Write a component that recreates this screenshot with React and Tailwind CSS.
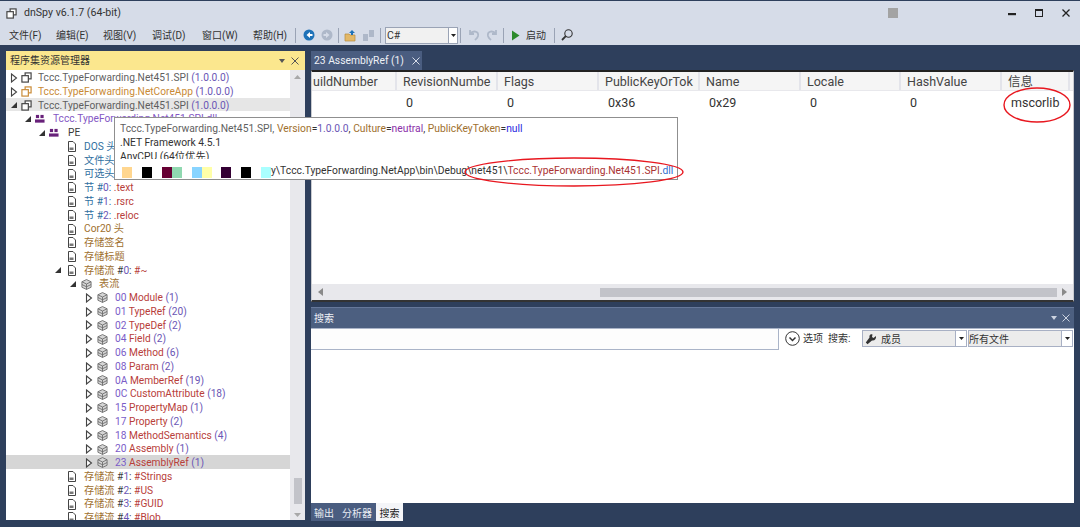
const P = 'text-[#7a5cc8]', R = 'text-[#b8403a]', B = 'text-[#2f6f9f]', W = 'text-[#a0702e]', D = 'text-[#3c3c3c]', G = 'text-[#5f5f5f]', V = 'text-[#6a55b5]';

function Arrow({ open }) {
  return (
    <svg width="8" height="10" viewBox="0 0 8 10" className="shrink-0">
      {open ? <path d="M7 2 V8 H1 Z" fill="#333" /> : <path d="M1.5 1 L6.5 5 L1.5 9 Z" fill="#fff" stroke="#444" strokeWidth="1.1" />}
    </svg>
  );
}
function AsmIcon({ color = '#444' }) {
  return (
    <svg width="11" height="11" viewBox="0 0 12 12" className="shrink-0" fill="#fff" stroke={color} strokeWidth="1.3">
      <rect x="4.5" y="1" width="6.5" height="6.5" />
      <rect x="1" y="4" width="7" height="7" />
    </svg>
  );
}
function ModIcon() {
  return (
    <svg width="10" height="10" viewBox="0 0 11 10" className="shrink-0" fill="#68217a">
      <rect x="1" y="0.5" width="3.5" height="3.5" />
      <rect x="6" y="0.5" width="3.5" height="3.5" />
      <rect x="0" y="5.5" width="10.5" height="3.5" />
    </svg>
  );
}
function FileIcon() {
  return (
    <svg width="8" height="11" viewBox="0 0 8 11" className="shrink-0" fill="#fff" stroke="#444" strokeWidth="1">
      <path d="M.5 .5 H5 L7.5 3 V10.5 H.5 Z" />
      <path d="M1.5 6.5 H5.5 V9 H1.5 Z" fill="#777" stroke="none" />
    </svg>
  );
}
function CubeIcon() {
  return (
    <svg width="11" height="11" viewBox="0 0 12 12" className="shrink-0" fill="#d5d5d5" stroke="#666" strokeWidth="0.9">
      <path d="M6 .6 L11 3 V9 L6 11.4 L1 9 V3 Z" />
      <path d="M1 3 L6 5.5 L11 3 M6 5.5 V11.4 M1 6 L6 8.5 L11 6" fill="none" />
    </svg>
  );
}

const Num = ({ n }) => <span className={V}>{n}</span>;
const ver = <span className={V}> (1.0.0.0)</span>;
const table = (id, name, c) => (
  <>
    <span className={P}>{id}</span> <span className={R}>{name}</span> <span className={V}>({c})</span>
  </>
);
const stream = (n, name) => (
  <>
    <span className={W}>存储流</span> <span className={D}>#</span><Num n={n} /><span className={D}>:</span> <span className={R}>{name}</span>
  </>
);
const sec = (n, name) => (
  <>
    <span className={B}>节 #</span><Num n={n} /><span className={B}>:</span> <span className={R}>{name}</span>
  </>
);

const rows = [
  { a: 'c', i: 'asm', ml: 'ml-[4px]', g: 'ml-[3px]', tg: 'ml-[6px]', t: <><span className={G}>Tccc.TypeForwarding.Net451.SPI</span>{ver}</> },
  { a: 'c', i: 'asmo', ml: 'ml-[4px]', g: 'ml-[3px]', tg: 'ml-[6px]', t: <><span className="text-[#c98a35]">Tccc.TypeForwarding.NetCoreApp</span>{ver}</> },
  { a: 'o', i: 'asm', ml: 'ml-[4px]', g: 'ml-[3px]', tg: 'ml-[6px]', bg: 'bg-[#e6e6e6]', t: <><span className={G}>Tccc.TypeForwarding.Net451.SPI</span>{ver}</> },
  { a: 'o', i: 'mod', ml: 'ml-[18px]', g: 'ml-[3px]', tg: 'ml-[8px]', t: <span className="text-[#8457c4]">Tccc.TypeForwarding.Net451.SPI.dll</span> },
  { a: 'o', i: 'mod', ml: 'ml-[32px]', g: 'ml-[3px]', tg: 'ml-[9px]', t: <span className={D}>PE</span> },
  { i: 'file', ml: 'ml-[62px]', tg: 'ml-[8px]', t: <span className={B}>DOS 头</span> },
  { i: 'file', ml: 'ml-[62px]', tg: 'ml-[8px]', t: <span className={B}>文件头</span> },
  { i: 'file', ml: 'ml-[62px]', tg: 'ml-[8px]', t: <span className={B}>可选头</span> },
  { i: 'file', ml: 'ml-[62px]', tg: 'ml-[8px]', t: sec('0', '.text') },
  { i: 'file', ml: 'ml-[62px]', tg: 'ml-[8px]', t: sec('1', '.rsrc') },
  { i: 'file', ml: 'ml-[62px]', tg: 'ml-[8px]', t: sec('2', '.reloc') },
  { i: 'file', ml: 'ml-[62px]', tg: 'ml-[8px]', t: <span className={W}>Cor20 头</span> },
  { i: 'file', ml: 'ml-[62px]', tg: 'ml-[8px]', t: <span className={W}>存储签名</span> },
  { i: 'file', ml: 'ml-[62px]', tg: 'ml-[8px]', t: <span className={W}>存储标题</span> },
  { a: 'o', i: 'file', ml: 'ml-[48px]', g: 'ml-[6px]', tg: 'ml-[8px]', t: stream('0', '#~') },
  { a: 'o', i: 'cube', ml: 'ml-[63px]', g: 'ml-[4px]', tg: 'ml-[7px]', t: <span className={W}>表流</span> },
  ...[
    ['00', 'Module', 1], ['01', 'TypeRef', 20], ['02', 'TypeDef', 2], ['04', 'Field', 2], ['06', 'Method', 6],
    ['08', 'Param', 2], ['0A', 'MemberRef', 19], ['0C', 'CustomAttribute', 18], ['15', 'PropertyMap', 1],
    ['17', 'Property', 2], ['18', 'MethodSemantics', 4], ['20', 'Assembly', 1], ['23', 'AssemblyRef', 1],
  ].map(([id, n, c]) => ({ a: 'c', i: 'cube', ml: 'ml-[79px]', g: 'ml-[4px]', tg: 'ml-[7px]', bg: id === '23' ? 'bg-[#d6d6d6]' : '', t: table(id, n, c) })),
  { i: 'file', ml: 'ml-[62px]', tg: 'ml-[8px]', t: stream('1', '#Strings') },
  { i: 'file', ml: 'ml-[62px]', tg: 'ml-[8px]', t: stream('2', '#US') },
  { i: 'file', ml: 'ml-[62px]', tg: 'ml-[8px]', t: stream('3', '#GUID') },
  { i: 'file', ml: 'ml-[62px]', tg: 'ml-[8px]', t: stream('4', '#Blob') },
];

function Row({ r }) {
  return (
    <div className={`h-[13.75px] pt-[2px] flex items-center whitespace-nowrap text-[10.2px] ${r.bg || ''}`}>
      <div className={`${r.ml} flex items-center`}>
        {r.a && <Arrow open={r.a === 'o'} />}
        <div className={`${r.g || ''} flex`}>
          {r.i === 'asm' && <AsmIcon />}
          {r.i === 'asmo' && <AsmIcon color="#c98a35" />}
          {r.i === 'mod' && <ModIcon />}
          {r.i === 'file' && <FileIcon />}
          {r.i === 'cube' && <CubeIcon />}
        </div>
        <div className={r.tg}>{r.t}</div>
      </div>
    </div>
  );
}

const Sep = ({ cls = '' }) => <div className={`w-px h-[15px] bg-[#9aa3b5] shrink-0 ${cls}`} />;

const cols = [
  ['w-[85px]', 'uildNumber', ''], ['w-[101px]', 'RevisionNumbe', '0'], ['w-[101px]', 'Flags', '0'], ['w-[101px]', 'PublicKeyOrTok', '0x36'],
  ['w-[101px]', 'Name', '0x29'], ['w-[100px]', 'Locale', '0'], ['w-[101px]', 'HashValue', '0'], ['w-[68px]', '信息', 'mscorlib'],
];

const swatches = [
  ['bg-[#ffd68f]', 'ml-[3px]'], ['bg-black', 'ml-[10px]'], ['bg-[#660033]', 'ml-[10px]'], ['bg-[#90d8b0]', ''],
  ['bg-[#88d4ff]', 'ml-[10px]'], ['bg-[#ffffa8]', ''], ['bg-[#330033]', 'ml-[9px]'], ['bg-black', 'ml-[10px]'], ['bg-[#aaffff]', 'ml-[10px]'],
];

function Combo({ w, children }) {
  return (
    <div className={`${w} h-[17px] flex bg-[#ececec] border border-[#a8b0c4] text-[10px] text-[#333]`}>
      <div className="flex-1 flex items-center overflow-hidden pt-[1px]">{children}</div>
      <div className="w-[11px] bg-white border-l border-[#a8b0c4] flex items-center justify-center">
        <svg width="5" height="3" viewBox="0 0 5 3"><path d="M0 0 H5 L2.5 3 Z" fill="#222" /></svg>
      </div>
    </div>
  );
}

export default function App() {
  return (
    <div className="relative w-[1080px] h-[527px] overflow-hidden flex flex-col bg-[#2e3f5c] font-['Roboto','Noto_Sans_CJK_SC',sans-serif]">
      <header className="h-[45px] shrink-0 border-t border-[#2e3f5c] bg-[#d6dce8] flex flex-col">
        <div className="h-[24px] flex items-center pl-[6px] pr-[10px]">
          <AsmIcon />
          <span className="ml-[7px] text-[10.6px] text-[#333]">dnSpy v6.1.7 (64-bit)</span>
          <div className="ml-auto w-[10px] h-[10px] bg-[#a3a3a3] mr-[110px]" />
          <svg width="8" height="10" viewBox="0 0 8 10" className="mr-[19px]"><rect x="0" y="5" width="8" height="2.2" fill="#222" /></svg>
          <svg width="8" height="10" viewBox="0 0 8 10" className="mr-[19px]" fill="none" stroke="#222"><rect x=".5" y="1.5" width="7" height="7" /><path d="M0 2 H8" strokeWidth="2" /></svg>
          <svg width="8" height="8" viewBox="0 0 8 8" stroke="#222" strokeWidth="1.3"><path d="M.5 .5 L7.5 7.5 M7.5 .5 L.5 7.5" /></svg>
        </div>
        <div className="flex-1 flex items-center pl-[9px] text-[10px] text-[#333]">
          <div className="flex gap-[17px] whitespace-nowrap">
            <span className="w-[30px]">文件(F)</span><span className="w-[30px]">编辑(E)</span><span className="w-[32px]">视图(V)</span>
            <span className="w-[33px]">调试(D)</span><span className="w-[34px]">窗口(W)</span><span className="w-[33px]">帮助(H)</span>
          </div>
          <Sep cls="ml-[9px]" />
          <svg width="12" height="12" viewBox="0 0 12 12" className="ml-[7px]"><circle cx="6" cy="6" r="5.5" fill="#1e72b8" /><path d="M7 3 L3.5 6 L7 9 V7 H9.5 V5 H7 Z" fill="#fff" /></svg>
          <svg width="12" height="12" viewBox="0 0 12 12" className="ml-[6px]"><circle cx="6" cy="6" r="5.5" fill="#aeb8c9" /><path d="M5 3 L8.5 6 L5 9 V7 H2.5 V5 H5 Z" fill="#d6dce8" /></svg>
          <Sep cls="ml-[5px]" />
          <svg width="13" height="13" viewBox="0 0 13 13" className="ml-[5px]"><path d="M1 5 H5 L6 6 H11 V12 H1 Z" fill="#e3b868" stroke="#b58a3c" strokeWidth=".7" /><path d="M5 4 L8 1 L11 4 H9 V6 H7 V4 Z" fill="#1e72b8" /></svg>
          <svg width="13" height="13" viewBox="0 0 13 13" className="ml-[5px]"><path d="M1 5 H6 V12 H1 Z M7 1 H12 V8 H7 Z" fill="#aeb8c9" /></svg>
          <Sep cls="ml-[5px]" />
          <div className="ml-[4px] w-[73px] h-[17px] flex bg-[#f1f1f1] border border-[#9aa3b5]">
            <span className="flex-1 pl-[1px] leading-[15px] text-[10.5px]">C#</span>
            <div className="w-[9px] bg-white border-l border-[#9aa3b5] flex items-center justify-center">
              <svg width="5" height="3" viewBox="0 0 5 3"><path d="M0 0 H5 L2.5 3 Z" fill="#222" /></svg>
            </div>
          </div>
          <Sep cls="ml-[2px]" />
          <svg width="12" height="12" viewBox="0 0 12 12" className="ml-[7px]" fill="none" stroke="#aeb8c9" strokeWidth="1.8"><path d="M2 1 V5 H6 M2 5 C5 1 11 2 10 7 C9.5 9 8 10 7 11" /></svg>
          <svg width="12" height="12" viewBox="0 0 12 12" className="ml-[6px]" fill="none" stroke="#aeb8c9" strokeWidth="1.8"><path d="M10 1 V5 H6 M10 5 C7 1 1 2 2 7 C2.5 9 4 10 5 11" /></svg>
          <Sep cls="ml-[5px]" />
          <svg width="9" height="11" viewBox="0 0 9 11" className="ml-[7px]"><path d="M1 .5 L8.5 5.5 L1 10.5 Z" fill="#2c8a2c" /></svg>
          <span className="ml-[6px] w-[22px] whitespace-nowrap">启动</span>
          <Sep cls="ml-[6px]" />
          <svg width="12" height="12" viewBox="0 0 12 12" className="ml-[6px]" fill="none" stroke="#333" strokeWidth="1.1"><circle cx="7.5" cy="4.5" r="3.7" /><path d="M4.8 7.2 L1 11" strokeWidth="1.8" /></svg>
        </div>
      </header>

      <main className="h-[475px] shrink-0 flex pt-[6px] pl-[6px]">
        <section className="w-[299px] shrink-0 flex flex-col">
          <div className="h-[19px] shrink-0 bg-[#fbe78e] flex items-center px-[4px] text-[10px] text-[#333]">
            <span>程序集资源管理器</span>
            <svg width="6" height="4" viewBox="0 0 6 4" className="ml-auto"><path d="M0 0 H6 L3 4 Z" fill="#555" /></svg>
            <svg width="8" height="8" viewBox="0 0 8 8" className="ml-[6px] mr-[2px]" stroke="#555" strokeWidth="1"><path d="M.5 .5 L7.5 7.5 M7.5 .5 L.5 7.5" /></svg>
          </div>
          <div className="flex-1 flex min-h-0 bg-white">
            <div className="flex-1 min-w-0 overflow-hidden">{rows.map((r, i) => <Row key={i} r={r} />)}</div>
            <div className="w-[15px] shrink-0 bg-[#e8e8ec] flex flex-col items-center pt-[5px] pb-[3px]">
              <svg width="7" height="4" viewBox="0 0 7 4"><path d="M0 4 H7 L3.5 0 Z" fill="#a8a8a8" /></svg>
              <div className="mt-auto w-[8px] h-[26px] bg-[#c2c3c9]" />
              <svg width="7" height="4" viewBox="0 0 7 4" className="mt-[9px]"><path d="M0 0 H7 L3.5 4 Z" fill="#a8a8a8" /></svg>
            </div>
          </div>
        </section>

        <section className="ml-[6px] w-[763px] shrink-0 flex flex-col">
          <div className="h-[19px] shrink-0 flex">
            <div className="w-[111px] bg-[#4a5d80] flex items-center pl-[3px] text-[10.3px] text-[#eef1f6] whitespace-nowrap">
              <span>23 AssemblyRef (1)</span>
              <svg width="8" height="8" viewBox="0 0 8 8" className="ml-[8px]" stroke="#d8deea" strokeWidth="1"><path d="M.5 .5 L7.5 7.5 M7.5 .5 L.5 7.5" /></svg>
            </div>
          </div>
          <div className="h-[232px] shrink-0 flex flex-col bg-white border-t-2 border-b-2 border-t-[#222] border-b-[#333] border-x border-x-[#c9cbd0]">
            <div className="flex h-[19px] shrink-0 bg-[#f5f5f5] border-b border-[#e8e8ec] text-[12.5px] text-[#444] whitespace-nowrap">
              {cols.map(([w, n]) => (
                <div key={n} className={`${w} shrink-0 border-r-2 border-[#e3e4ea] overflow-hidden px-[2px] first:pl-[1px] leading-[19px] [&:not(:first-child)]:pl-[6px]`}>{n}</div>
              ))}
            </div>
            <div className="flex h-[24px] shrink-0 text-[12.5px] text-[#333] whitespace-nowrap">
              {cols.map(([w, n, v]) => (
                <div key={n} className={`${w} shrink-0 pl-[9px] leading-[24px]`}>{v}</div>
              ))}
            </div>
            <div className="mt-auto h-[16px] shrink-0 bg-[#e8e8ec] flex items-center px-[6px]">
              <svg width="5" height="8" viewBox="0 0 5 8"><path d="M5 0 V8 L0 4 Z" fill="#8a8a8a" /></svg>
              <div className="ml-[277px] w-[457px] h-[9px] bg-[#c2c3c9]" />
              <svg width="5" height="8" viewBox="0 0 5 8" className="ml-auto"><path d="M0 0 V8 L5 4 Z" fill="#8a8a8a" /></svg>
            </div>
          </div>
          <div className="mt-[5px] h-[21px] shrink-0 bg-[#4c5f80] border-t border-[#66789a] flex items-center px-[3px] text-[10px] text-[#eef1f6]">
            <span>搜索</span>
            <svg width="6" height="4" viewBox="0 0 6 4" className="ml-auto"><path d="M0 0 H6 L3 4 Z" fill="#ccd3e0" /></svg>
            <svg width="8" height="8" viewBox="0 0 8 8" className="ml-[5px] mr-[1px]" stroke="#ccd3e0" strokeWidth="1"><path d="M.5 .5 L7.5 7.5 M7.5 .5 L.5 7.5" /></svg>
          </div>
          <div className="h-[175px] shrink-0 bg-white flex flex-col">
            <div className="h-[20px] flex items-center border-t border-[#aab4c8] text-[10px] text-[#333] whitespace-nowrap">
              <div className="w-[468px] h-[21px] shrink-0 self-start bg-[#fdfdfd] border-r border-b border-[#aab4c8]" />
              <svg width="15" height="15" viewBox="0 0 15 15" className="ml-[6px]" fill="none" stroke="#333"><circle cx="7.5" cy="7.5" r="6.8" /><path d="M4.5 6.5 L7.5 9.5 L10.5 6.5" strokeWidth="1.5" /></svg>
              <span className="ml-[3px]">选项</span>
              <span className="ml-[5px] w-[34px]">搜索:</span>
              <Combo w="w-[105px]">
                <svg width="12" height="12" viewBox="0 0 12 12" className="ml-[2px] shrink-0"><path d="M11 3 L8.5 5 L7 4 L7.5 1.5 C5.5 .5 4 2 4.5 4.5 L.8 9.5 L2.5 11.2 L7 7.5 C9.5 8 11.5 6 11 3 Z" fill="#333" /></svg>
                <span className="ml-[4px]">成员</span>
              </Combo>
              <div className="w-px" />
              <Combo w="w-[105px]"><span>所有文件</span></Combo>
            </div>
          </div>
          <div className="h-[18px] shrink-0 flex items-stretch text-[10px] text-[#e8ecf3] whitespace-nowrap">
            <div className="w-[65px] bg-[#4a5d80] flex items-center pl-[3px] gap-[8px] pt-[2px]"><span>输出</span><span>分析器</span></div>
            <div className="w-[27px] bg-[#f4f5f8] text-[#222] flex items-center justify-center pt-[2px]">搜索</div>
          </div>
        </section>
      </main>

      <div className="absolute left-[114px] top-[117px] w-[564px] h-[63px] bg-white border border-[#8f8f8f] pl-[5px] pt-[4px] text-[10.3px] leading-[14px] whitespace-nowrap text-[#333]">
        <div className="h-[14px]">
          <span className={G}>Tccc.TypeForwarding.Net451.SPI</span><span className={G}>,</span> <span className="text-[#a0702e]">Version</span>=<span className={V}>1.0.0.0</span>, <span className="text-[#a0702e]">Culture</span>=<span className="text-[#8a2ea8]">neutral</span>, <span className="text-[#a0702e]">PublicKeyToken</span>=<span className="text-[#2a2ae0]">null</span>
        </div>
        <div className="h-[14px]">.NET Framework 4.5.1</div>
        <div className="h-[9px] overflow-hidden">AnyCPU (64位优先)</div>
        <div className="flex items-end h-[15px] mt-[4px] -ml-[1px]">
          {swatches.map(([c, m], i) => <div key={i} className={`w-[10px] h-[11px] shrink-0 ${c} ${m}`} />)}
          <span>y\Tccc.TypeForwarding.NetApp\bin\Debug\net451\<span className="text-[#a33]">Tccc.TypeForwarding.Net451.SPI</span>.<span className="text-[#2f6fd0]">dll</span></span>
        </div>
      </div>

      <svg className="absolute left-0 top-0 pointer-events-none" width="1080" height="527" fill="none" stroke="#e8171f" strokeWidth="1.4">
        <ellipse cx="1037" cy="105" rx="33" ry="17" />
        <ellipse cx="574" cy="172" rx="109" ry="14" />
      </svg>
    </div>
  );
}
